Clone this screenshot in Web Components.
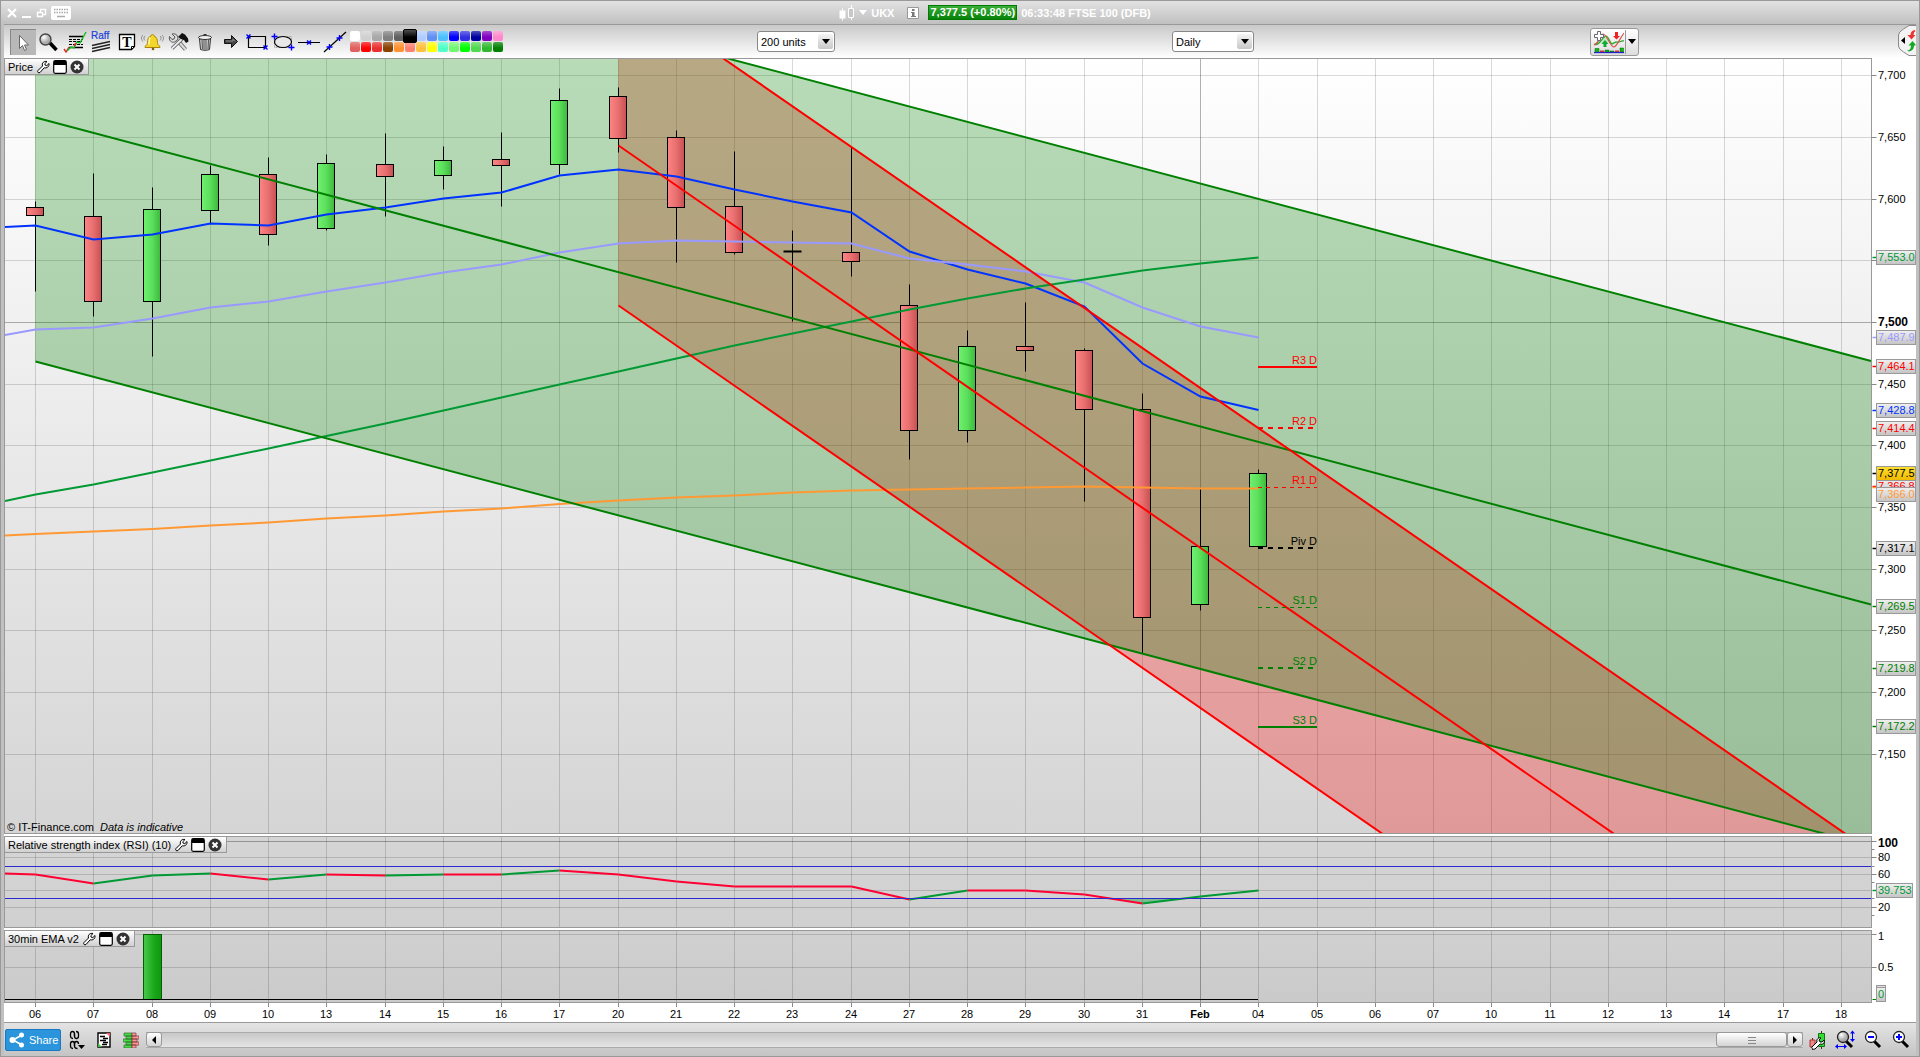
<!DOCTYPE html>
<html lang="en">
<head>
<meta charset="utf-8">
<title>UKX - FTSE 100 (DFB)</title>
<style>
    html, body { margin: 0; height: 100%; }
    body { font: 11px/14px "Liberation Sans", Arial, sans-serif; color: #000; }
</style>
</head>
<body>
<trading-window></trading-window>

<script>

/* ---------- icons ---------- */

const CROSS = (x, y) => `<path d="M${x-2} ${y-2}l4 4m0-4l-4 4" stroke="#00f" stroke-width="1.4" fill="none"/>`;
const PLUS = (x, y) => `<path d="M${x-3} ${y}h6m-3-3v6" stroke="#00f" stroke-width="1.4" fill="none"/>`;

const LENS = /* html */ `
    <defs><radialGradient id="l" cx=".35" cy=".3"><stop offset="0" stop-color="#fff"/><stop offset="1" stop-color="#aaa"/></radialGradient></defs>`;

const ICONS = {
    cursor: [26, 26, `<path d="M9.5 6.500v13l3-3 2 5 2-1-2-4.500h4z" fill="#fff" stroke="#666"/>`],
    magnifier: [26, 26, `${LENS}<path d="M14 14l6.500 7" stroke="#000" stroke-width="3.500"/><circle cx="9.500" cy="10.500" r="5.500" fill="url(#l)" stroke="#444" stroke-width="1.400"/>`],
    study: [26, 26, `<g stroke="#000" fill="none"><path d="M7 7.500h14M7 18.500h14" stroke-width="1.400"/><path d="M7 10.500h14M7 12.500h13M7 15.500h14" stroke-dasharray="3 1"/></g>
        <path d="M2 20l2 3 3-5" stroke="#e22" fill="none" stroke-width="1.400"/><path d="M5 22l4-4 3 1 3-6 3 1 6-11" stroke="#1b2" fill="none" stroke-width="1.400"/><path d="M12 17l2-3" stroke="#e22" stroke-width="1.500"/>`],
    raff: [26, 26, `<text x="3" y="10" font-size="10" fill="#1a3fd8" stroke="#1a3fd8" stroke-width=".2">Raff</text><path d="M4 16.500l18-4M4 19.500l18-4M4 22.500l18-4" stroke="#222" stroke-width="1.300"/>`],
    text: [26, 26, `<path d="M5.500 5.500h15v12l-3 3h-12z" fill="#fff" stroke="#000" stroke-width="1.300"/><path d="M20.500 17.500h-3v3z" fill="#fff" stroke="#000"/><text x="13" y="18" text-anchor="middle" font-family="Liberation Serif, serif" font-weight="bold" font-size="14">T</text>`],
    bell: [26, 26, `<path d="M12.500 5.500c1 0 1.500.7 1.500 1.500 3 1 3.500 4 3.500 6.500 0 2 1 2.500 2.500 4v1H5v-1c1.500-1.500 2.500-2 2.500-4 0-2.500.5-5.500 3.500-6.500 0-.8.5-1.500 1.500-1.500z" fill="#f4d52a" stroke="#a8860a"/><path d="M10 8.500c-1 2-1 5-1 7" stroke="#fff8b0" stroke-width="1.500" fill="none"/><circle cx="13" cy="20" r="1.300" fill="#8a5a10"/><path d="M5 7c-1.500 1-1.500 3 0 4.500M3 6c-2 2-2 4 0 6.500M20 7c1.500 1 1.500 3 0 4.500M22 6c2 2 2 4 0 6.500" stroke="#777" stroke-width=".8" fill="none"/>`],
    tools: [26, 26, `<path d="M12 12l7.500 8.500" stroke="#666" stroke-width="4"/><path d="M12 12l7.500 8.500" stroke="#ddd" stroke-width="2.200"/><path d="M17 9L6 19.500" stroke="#555" stroke-width="3.500"/><path d="M17 9L6 19.500" stroke="#eee" stroke-width="1.800"/><path d="M6 5l3 3-1 2-2 .5-2.500-3c-1 4 2 6.500 5 5.500l3-2c1.500-4-1.500-7-5.500-6z" fill="#ddd" stroke="#555"/><path d="M12 8l4-4 3 1.500 3 4 .5 3-2.500 1.500-2-3-2-.5z" fill="#111"/>`],
    trash: [26, 26, `<path d="M7.500 10h11l-1 10.500c-2 1-7 1-9 0z" fill="#ccc" stroke="#333"/><path d="M10 11l.5 9M12 11v9.500M14 11v9.500M16.500 11l-.5 9" stroke="#555"/><ellipse cx="13" cy="8.500" rx="6.500" ry="2" fill="#eee" stroke="#333"/><path d="M11 6.500c0-1.500 4-1.500 4 0" fill="none" stroke="#333"/>`],
    arrow: [26, 26, `<path d="M6.500 10.500h7v-4l6 6-6 6v-4h-7z" fill="#444" stroke="#111"/><path d="M8 12h7v-2l2 2.500" fill="none" stroke="#888"/>`],
    rect: [26, 26, `<path d="M4.500 7.500h17v11h-17z" fill="none" stroke="#000" stroke-width="1.200"/>${CROSS(4.5, 7.5)}${CROSS(21.5, 18.5)}`],
    ellipse: [26, 26, `<path d="M4.500 7.500h17v11h-17z" fill="none" stroke="#aaa" stroke-dasharray="2 1"/><ellipse cx="13" cy="13" rx="8.500" ry="5.500" fill="#e8e8e8" stroke="#000" stroke-width="1.200"/>${PLUS(4.5, 7.5)}${PLUS(21.5, 18.5)}`],
    hline: [26, 26, `<path d="M2 13.500h22" stroke="#000"/>${CROSS(13, 13.5)}`],
    dline: [26, 26, `<path d="M2 23L24 3" stroke="#000" stroke-width="1.200"/>${PLUS(7.5, 18)}${PLUS(17.5, 9)}`],
    indicators: [32, 24, `<path d="M2 14c5 3 8-7 12-8 3 1 4 7 6 8l4-2c4 1 5-2 8-1" fill="#bfe8bf" stroke="#2a2" stroke-width="1.200"/><path d="M2 15c5-2 5-7 9-11 4 0 7 13 11 13 3-1 5-7 10-14" fill="none" stroke="#d55" stroke-width="1.200"/>
        <path d="M5.500 1.500h3v3h3v3h-3v3h-3v-3h-3v-3h3z" fill="#fff" stroke="#667"/><path d="M23 2h3v4h2l-3.500 3.500L21 6h2z" fill="#e22"/><path d="M11.500 17v-3h-2l3.500-4 3.500 4h-2v3z" fill="#1a3"/>
        <path d="M3 18.500h4v4H3zM13 20h4v2h-4zM28 18h3.500v4H28zM18 21h4v1h-4z" fill="#1b1" stroke="#060" stroke-width=".5"/><path d="M8 20.500h4V22H8zM23 20.500h4V22h-4z" fill="#d33"/><path d="M2 22.500h30" stroke="#22c" stroke-width="1.300"/>`],
    swap: [18, 31, `<path d="M18 .5h-7L5.500 4Q.5 7 .5 10v11q0 3 5 6l5.500 3.500h7" fill="#f3f3f3" stroke="#888"/><path d="M7 12v7l-4-3.500z"/><path d="M16.500 5q-4 1-4 5H9.500l4 4.500 4-4.500h-2q0-3 2-4z" fill="#e33"/><path d="M9 25.500q4 0 4-5h-2.500l4-4.500 3 3.500v1h-1.500q0 5-5 6z" fill="#1a2"/>`],
    close: [12, 12, `<path d="M2 2l8 8m0-8l-8 8" stroke="#fff" stroke-width="2.200"/>`],
    minimise: [12, 12, `<path d="M1 10h9" stroke="#fff" stroke-width="2"/>`],
    restore: [12, 12, `<path d="M4.500 2.500h5v5h-5z" fill="#ccc" stroke="#fff" stroke-width="1.400"/><path d="M1.500 5.500h5v4h-5z" fill="#ccc" stroke="#fff" stroke-width="1.400"/>`],
    keyboard: [20, 14, `<rect width="20" height="14" rx="2" fill="#fff"/><path d="M3 3.500h14M3 6.500h14" stroke="#aaa" stroke-width="1.500" stroke-dasharray="1.500 1"/><path d="M6 10.500h8" stroke="#aaa" stroke-width="1.500"/>`],
    candles: [16, 16, `<path d="M3.500 3.500v12M12.500 0v15" stroke="#fff"/><path d="M.5 5.500h6v8h-6z" fill="#fff"/><path d="M9.500 3.500h5v9h-5z" fill="#c8c8c8" stroke="#fff"/>`],
    caret: [8, 5, `<path d="M0 0h8L4 5z" fill="currentColor"/>`],
    info: [12, 12, `<path d="M.5.5h11v11H.5z" fill="#fff" stroke="#999"/><path d="M5 2h2.500v2H5zM4 5h3.500v4H9v1H4V9h1V6H4z" fill="#777"/>`],
    wrench: [14, 14, `<path d="M2 10.500l4.500-4.500C5.500 3 8 .8 11 1.500L8.800 3.700l.4 1.500 1.600.5L13 3.500c.5 3-2 5-4.800 4.300L4 12.500c-1.500 1-3-.5-2-2z" fill="#fff" stroke="#000"/>`],
    pane: [14, 14, `<rect x=".7" y=".7" width="12.600" height="12.600" rx="1.500" fill="#fff" stroke="#000" stroke-width="1.200"/><path d="M1 1h12v4H1z"/>`],
    shut: [14, 14, `<circle cx="7" cy="7" r="6.500" fill="#333"/><path d="M4.500 4.500l5 5m0-5l-5 5" stroke="#fff" stroke-width="2"/>`],
    share: [16, 16, `<path d="M13 3L4 8l9 5" stroke="#fff" stroke-width="1.600" fill="none"/><g fill="#fff"><circle cx="12.500" cy="3" r="2.500"/><circle cx="3.500" cy="8" r="3"/><circle cx="12.500" cy="13" r="2.500"/></g>`],
    link: [16, 20, `<g fill="none" stroke="#000" stroke-width="1.300"><path d="M4 8.500Q1.500 8.500 1.500 6V4q0-2.500 2-2.500T5.500 4v2M7 1.500q2.500 0 2.500 2.500v2q0 2.500-2 2.500T5.500 6M4 18.500q-2.500 0-2.500-2.500v-2q0-2.500 2-2.500t2 2.500v2M5.500 16q0 2.500 3 2.500M5.500 14q0-2.500 2-2.500T9.500 14"/><path d="M5.500 3.500v3M5.500 13v3"/></g><path d="M9 15h7l-3.500 4z"/>`],
    notes: [14, 16, `<path d="M1 1h12v14H1z" fill="#fff" stroke="#000" stroke-width="1.400"/><path d="M3 4.500h5M6 6.500h5M3 8.500h6M6 10.500h5M5 12.500h5" stroke="#000" stroke-width="1.400"/><path d="M9 1h4v4z" fill="#e66"/><path d="M1 15v-4l4 4z" fill="#4b4"/>`],
    depth: [16, 16, `<path d="M1 1h8v3H1zM3 4h6v3H3zM0 7h9v3H0zM3 10h6v3H3zM1 13h8v3H1z" fill="#4d4" stroke="#363" stroke-width=".7"/><path d="M9 1h4v3H9zM9 4h7v3H9zM9 7h5v3H9zM9 10h7v3H9zM9 13h4v3H9z" fill="#f99" stroke="#733" stroke-width=".7"/>`],
    style: [18, 20, `<path d="M3.500 8v12M12.500 1v18" stroke="#622"/><path d="M1 10h5v7H1z" fill="#e88" stroke="#a33"/><path d="M9.500 3.500h6v13h-6z" fill="#3d3" stroke="#171"/><path d="M3 17l5-5c-1-3 2-5 4-4l-2 2 1 2h2l2-2c1 3-1 5-4 4l-5 5c-2 1-4-1-3-2z" fill="#fff" stroke="#000"/>`],
    fit: [20, 20, `${LENS}<path d="M11 11l6 6" stroke="#000" stroke-width="3"/><circle cx="8" cy="7" r="5.500" fill="url(#l)" stroke="#222" stroke-width="1.300"/><path d="M17.500 2v8M2 16.500h8" stroke="#00f"/><path d="M15 3.500L17.500.5 20 3.500zM15 9l2.500 3L20 9zM3 14l-3 2.500L3 19zM9 14l3 2.500L9 19z" fill="#00f"/>`],
    zoomOut: [20, 20, `<path d="M11 11l6 6" stroke="#000" stroke-width="3"/><circle cx="8" cy="7" r="5.500" fill="#fff" stroke="#222" stroke-width="1.300"/><path d="M5 7h6" stroke="#00f" stroke-width="2"/>`],
    zoomIn: [20, 20, `<path d="M11 11l6 6" stroke="#000" stroke-width="3"/><circle cx="8" cy="7" r="5.500" fill="#fff" stroke="#222" stroke-width="1.300"/><path d="M5 7h6M8 4v6" stroke="#00f" stroke-width="2"/>`],
    left: [6, 8, `<path d="M5 0v8L1 4z"/>`],
    right: [6, 8, `<path d="M1 0v8l4-4z"/>`],
    grip: [8, 8, `<path d="M0 1.500h8M0 4.500h8M0 7.500h8" stroke="#888"/>`],
};

class UiIcon extends HTMLElement {
    constructor(){
        super();
        this.attachShadow({mode:'open'});
    }

    connectedCallback(){
        const [w, h, body] = ICONS[this.getAttribute('name')];
        this.shadowRoot.innerHTML = /* html */ `
            <style>
                :host { display: block; flex: none; }
                svg { display: block; font-family: "Liberation Sans", sans-serif; }
            </style>
            <svg width="${w}" height="${h}" viewBox="0 0 ${w} ${h}" aria-hidden="true">${body}</svg>
        `;
    }
}
customElements.define('ui-icon', UiIcon);


/* ---------- title bar ---------- */

class TitleBar extends HTMLElement {
    constructor(){
        super();
        this.attachShadow({mode:'open'});
        this.shadowRoot.innerHTML = /* html */ `
            <style>
                :host {
                    display: flex; align-items: center; height: 23px; padding-left: 5px;
                    background: linear-gradient(#e2e2e2, #c0c0c0);
                    color: #fff; font-weight: bold;
                }
                button { border: 0; padding: 0; background: none; color: #fff; }
                .window { display: flex; align-items: center; gap: 3px; }
                .symbol { flex: 1; display: flex; align-items: center; justify-content: center; }
                .pick { display: flex; align-items: center; gap: 4px; font: inherit; margin-right: 13px; }
                .price { margin: 0 4px 0 9px; padding: 0 1px; border: 1px solid #007a00; background: linear-gradient(#3aae3a, #078207); line-height: 13px; }
            </style>
            <div class="window">
                <button aria-label="Close"><ui-icon name="close"></ui-icon></button>
                <button aria-label="Minimise"><ui-icon name="minimise"></ui-icon></button>
                <button aria-label="Restore"><ui-icon name="restore"></ui-icon></button>
                <button aria-label="Keyboard"><ui-icon name="keyboard"></ui-icon></button>
            </div>
            <div class="symbol">
                <button class="pick"><ui-icon name="candles"></ui-icon><ui-icon name="caret"></ui-icon>UKX</button>
                <button aria-label="Information"><ui-icon name="info"></ui-icon></button>
                <span class="price">7,377.5 (+0.80%)</span>
                <span>06:33:48 FTSE 100 (DFB)</span>
            </div>
        `;
    }
}
customElements.define('title-bar', TitleBar);


/* ---------- toolbar ---------- */

class DropDown extends HTMLElement {
    constructor(){
        super();
        this.attachShadow({mode:'open'});
    }

    connectedCallback(){
        this.shadowRoot.innerHTML = /* html */ `
            <style>
                :host { display: inline-grid; align-items: center; }
                select, .arrow { grid-area: 1 / 1; }
                select {
                    appearance: none; box-sizing: border-box; width: 100%; height: 21px; padding: 0 20px 0 3px;
                    border: 1px solid #888; border-radius: 3px; background: #fff; font: inherit; color: #000;
                }
                .arrow {
                    justify-self: end; display: grid; place-items: center; width: 15px; height: 15px; margin-right: 2px;
                    border-radius: 2px; background: linear-gradient(#f4f4f4, #c8c8c8); pointer-events: none;
                }
            </style>
            <select aria-label="${this.getAttribute('label')}"><option>${this.getAttribute('value')}</option></select>
            <span class="arrow"><ui-icon name="caret"></ui-icon></span>
        `;
    }
}
customElements.define('drop-down', DropDown);

const TOOLS = ['cursor', 'magnifier', 'study', 'raff', 'text', 'bell', 'tools', 'trash', 'arrow', 'rect', 'ellipse', 'hline', 'dline'];
const SWATCHES = [
    '#ffffff', '#d0d0d0', '#a8a8a8', '#808080', '#606060', '#000000', '#b0ccff', '#6090f4', '#4cc0ff', '#0000ff', '#3030e0', '#0000a0', '#8000c0', '#ff88cc',
    '#e06060', '#ff0000', '#e83030', '#8a4000', '#ff9030', '#ff8070', '#ffc040', '#ffff00', '#50ffc8', '#70f870', '#00ff00', '#50d850', '#30b830', '#008000'
];

class ToolBar extends HTMLElement {
    constructor(){
        super();
        this.attachShadow({mode:'open'});
        this.shadowRoot.innerHTML = /* html */ `
            <style>
                :host {
                    display: flex; align-items: center; height: 33px; padding-left: 6px;
                    border-top: 1px solid #999; background: linear-gradient(#c9c9c9, #fff);
                }
                button { border: 0; padding: 0; background: none; }
                .tools { display: flex; flex: none; }
                .tools .on { background: #b8b8b8; box-shadow: inset 1px 1px #888; }
                .palette { display: grid; grid-template-columns: repeat(14, 10px); grid-auto-rows: 10px; gap: 1px; margin-left: 2px; flex: none; }
                .palette button { border-radius: 2px; background: linear-gradient(rgba(255,255,255,.3), rgba(255,255,255,0) 60%) var(--c); }
                .palette .on { margin: -2px; border: 1px solid #000; z-index: 1; }
                .study { display: flex; align-items: center; height: 26px; border: 1px solid #999; border-radius: 3px; background: linear-gradient(#fff, #ddd); }
                .study button:first-child { padding: 0 1px; border-right: 1px solid #999; }
                .study button:last-child { padding: 0 2px; }
                .edge { align-self: flex-start; }
                .units { width: 78px; }
                .period { width: 82px; }
            </style>
            <div class="tools">
                ${TOOLS.map((t, i) => `<button aria-label="${t}" class="${i ? '' : 'on'}"><ui-icon name="${t}"></ui-icon></button>`).join('')}
            </div>
            <div class="palette">
                ${SWATCHES.map((c, i) => `<button aria-label="${c}" class="${i === 5 ? 'on' : ''}" style="--c:${c}"></button>`).join('')}
            </div>
            <span style="flex:254"></span>
            <drop-down class="units" label="History" value="200 units"></drop-down>
            <span style="flex:337"></span>
            <drop-down class="period" label="Timeframe" value="Daily"></drop-down>
            <span style="flex:336"></span>
            <div class="study">
                <button aria-label="Add indicator"><ui-icon name="indicators"></ui-icon></button>
                <button aria-label="Indicator list"><ui-icon name="caret"></ui-icon></button>
            </div>
            <span style="flex:259"></span>
            <button class="edge" aria-label="Trade"><ui-icon name="swap"></ui-icon></button>
        `;
    }
}
customElements.define('tool-bar', ToolBar);


/* ---------- chart data, in layout units ---------- */

const DAYS = '06 07 08 09 10 13 14 15 16 17 20 21 22 23 24 27 28 29 30 31 Feb 04 05 06 07 10 11 12 13 14 17 18'.split(' ');
const dayX = i => Math.round(35.2 + i * 58.25) + .5;
const priceY = p => 384.3 + (7450 - p) * 1.2333;

// high, body top, body bottom, low, up
const CANDLES = [
    [201, 207, 215, 291, 0], [173, 216, 301, 316, 0], [187, 209, 301, 356, 1], [165, 174, 210, 223, 1],
    [157, 174, 234, 245, 0], [154, 163, 228, 230, 1], [133, 164, 176, 216, 0], [146, 160, 175, 189, 1],
    [132, 159, 165, 206, 0], [88, 100, 164, 174, 1], [87, 96, 138, 152, 0], [130, 137, 207, 262, 0],
    [151, 206, 252, 254, 0], [230, 251, 251, 321, 0], [147, 252, 261, 276, 0], [284, 305, 430, 459, 0],
    [330, 346, 430, 442, 1], [302, 346, 350, 371, 0], [348, 350, 409, 501, 0], [393, 409, 617, 653, 0],
    [488, 546, 604, 610, 1], [469, 473, 546, 546, 1]
];

// first value sits on the left edge, the rest on the days
const AVERAGES = [
    ['#0033ff', [227, 225.5, 239.5, 234.5, 223.5, 225.5, 214.5, 207.5, 198.5, 192.5, 175.5, 169.5, 176.5, 189.5, 201.5, 212.5, 251.5, 269.5, 283.5, 306.5, 363.5, 396.5, 410]],
    ['#9999ff', [335, 329.5, 327.5, 318.5, 307.5, 301.5, 291.5, 282.5, 272.5, 264.5, 252.5, 243.5, 240.5, 241.5, 242.5, 243.5, 258.5, 264.5, 271.5, 282.5, 307.5, 326.5, 337.5]],
    ['#009933', [501, 494.5, 484.5, 472.5, 460.5, 448.5, 436, 423.5, 410.5, 397.5, 384.5, 371.5, 358.5, 345.5, 333.5, 321.5, 309.5, 298.5, 288.5, 279.5, 270.5, 263.5, 257.5]],
    ['#ff9933', [535.5, 534, 531.5, 529, 525.5, 522.5, 518.5, 515.5, 511.5, 508.5, 504, 500.5, 497.5, 495.5, 492.5, 490.5, 489.5, 488.5, 487.5, 486.5, 487.5, 488.5, 488.5]]
];

const RSI = [873.5, 874.5, 883.5, 875.5, 873.5, 879.5, 874.5, 875.5, 874.5, 874.5, 870.5, 874.5, 881.5, 886.5, 886.5, 886.5, 899.5, 890.5, 890.5, 894.5, 903.5, 896.5, 890.5];

const PIVOTS = [
    ['R3 D', 7464.1, '#ff0000', 2, ''], ['R2 D', 7414.4, '#ff0000', 2, '5 5'], ['R1 D', 7366.8, '#ff0000', 1, '4 4'],
    ['Piv D', 7317.1, '#000000', 2, '5 5'],
    ['S1 D', 7269.5, '#008000', 1, '4 4'], ['S2 D', 7219.8, '#008000', 2, '5 5'], ['S3 D', 7172.2, '#008000', 2, '']
];

const TAGS = [
    ['7,553.0', 7553, '#009933'], ['7,487.9', 7487.9, '#9999ff'], ['7,464.1', 7464.1, '#ff0000'], ['7,428.8', 7428.8, '#0033ff'],
    ['7,414.4', 7414.4, '#ff0000'], ['7,366.8', 7366.8, '#ff0000'], ['7,366.0', 7366, '#ff9933'], ['7,377.5', 7377.5, '#000000'], ['7,317.1', 7317.1, '#000000'],
    ['7,269.5', 7269.5, '#008000'], ['7,219.8', 7219.8, '#008000'], ['7,172.2', 7172.2, '#008000']
];


/* ---------- chart panels ---------- */

const AXIS = 45;
const PLOT = 1867;

class ChartPanel extends HTMLElement {
    constructor(){
        super();
        this.attachShadow({mode:'open'});
        this.shadowRoot.innerHTML = /* html */ `
            <style>
                :host { display: flex; position: relative; min-height: 0; background: #fff; }
                svg { display: block; flex: 1; width: 100%; min-width: 0; height: auto; font-size: 11px; overflow: visible; }
                .head {
                    position: absolute; left: 1px; top: 1px; display: flex; align-items: center; gap: 3px; box-sizing: border-box; height: 16px; padding: 0 4px 0 3px;
                    border: solid #999; border-width: 0 1px 1px 0; background: linear-gradient(#fff, #d0d0d0);
                }
                .head button { border: 0; padding: 0; background: none; }
            </style>
            <svg></svg>
            <div class="head">
                <slot></slot>
                <button aria-label="Settings"><ui-icon name="wrench"></ui-icon></button>
                <button aria-label="Detach"><ui-icon name="pane"></ui-icon></button>
                <button aria-label="Remove"><ui-icon name="shut"></ui-icon></button>
            </div>
        `;
        this.svg = this.shadowRoot.querySelector('svg');
    }

    connectedCallback(){
        this.observer = new ResizeObserver(() => this.render());
        this.observer.observe(this);
        this.render();
    }

    disconnectedCallback(){
        this.observer.disconnect();
    }

    x(v){ return (v - 4) * this.kx; }
    y(v){ return (v - this.top) * this.ky; }

    path(points){
        return points.map(([a, b], i) => `${i ? 'L' : 'M'}${this.x(a).toFixed(2)} ${this.y(b).toFixed(2)}`).join('');
    }

    days(values){
        return values.map((v, i) => [i ? dayX(i - 1) : 5, v]);
    }

    row(v, strong){
        const y = Math.floor(this.y(v)) + .5;
        return `<path d="M1 ${y}H${this.right}" stroke="#000" stroke-opacity="${strong ? .3 : .15}"/>`;
    }

    columns(){
        return DAYS.map((d, i) => `<path d="M${this.x(dayX(i))} 1V${this.height}" stroke="#000" stroke-opacity="${d === 'Feb' ? .3 : .15}"/>`).join('');
    }

    tick(v){
        return `<path d="M${this.right} ${Math.floor(this.y(v)) + .5}h5" stroke="#888"/>`;
    }

    label(text, v, bold){
        // keep the topmost label inside its panel
        const y = Math.max(Math.floor(this.y(v)) + 4, bold ? 11 : 10);
        return `${this.tick(v)}<text x="${this.right + 6.5}" y="${y}" ${bold ? 'font-weight="bold" font-size="12"' : ''}>${text}</text>`;
    }

    tag(text, v, color, shift = 0, width = 39){
        const y = Math.floor(this.y(v)) + .5;
        const fill = text === '7,377.5' ? 'url(#gold)' : 'url(#tag)';
        return `<path d="M${this.right + 1} ${y}h4" stroke="${color}" stroke-width="1.500"/>
            <rect x="${this.right + 5}" y="${y - 7 + shift}" width="${width}" height="14" fill="${fill}" stroke="#999"/>
            <text x="${this.right + 6.5}" y="${y + 3.5 + shift}" fill="${color}">${text}</text>`;
    }

    render(){
        const box = this.getBoundingClientRect();
        if(!box.width || !box.height) return;

        this.height = Math.round(box.height);
        this.width = Math.round(box.width);
        this.right = this.width - AXIS + .5;
        this.kx = (this.width - AXIS) / PLOT;
        this.ky = this.height / this.span;
        const [from, to] = this.shade;

        this.svg.innerHTML = /* html */ `
            <defs>
                <linearGradient id="bg" x2="0" y2="1"><stop stop-color="${from}"/><stop offset="1" stop-color="${to}"/></linearGradient>
                <linearGradient id="up"><stop stop-color="#70f070"/><stop offset=".5" stop-color="#5ce05c"/><stop offset="1" stop-color="#3cb83c"/></linearGradient>
                <linearGradient id="down"><stop stop-color="#ff8484"/><stop offset=".5" stop-color="#e87070"/><stop offset="1" stop-color="#c85050"/></linearGradient>
                <linearGradient id="bar"><stop stop-color="#4cc84c"/><stop offset=".6" stop-color="#18a818"/><stop offset="1" stop-color="#109810"/></linearGradient>
                <linearGradient id="tag" x2="0" y2="1"><stop stop-color="#f0f0f0"/><stop offset="1" stop-color="#c4c4c4"/></linearGradient>
                <linearGradient id="gold" x2="0" y2="1"><stop stop-color="#ffe030"/><stop offset="1" stop-color="#f0b800"/></linearGradient>
                <clipPath id="plot"><rect x="1" y="1" width="${this.right - 1}" height="${this.height - 2}"/></clipPath>
            </defs>
            <rect x=".5" y=".5" width="${this.right - .5}" height="${this.height - 1}" fill="url(#bg)"/>
            <g clip-path="url(#plot)" fill="none">${this.columns()}${this.draw()}</g>
            <rect x=".5" y=".5" width="${this.right - .5}" height="${this.height - 1}" fill="none" stroke="#999"/>
            ${this.axis()}
        `;
    }
}

class PricePanel extends ChartPanel {
    top = 58;
    span = 776;
    shade = ['#ffffff', '#d5d5d5'];

    candle([high, top, bottom, low, up], i){
        const x = this.x(dayX(i));
        const [h, t, b, l] = [high, top, bottom, low].map(v => Math.round(this.y(v)) + .5);
        if(top === bottom){
            return `<path d="M${x} ${h}V${l}" stroke="#000"/><path d="M${x - 9} ${t}h18" stroke="#000" stroke-width="2"/>`;
        }
        return `<path d="M${x} ${h}V${l}" stroke="#000"/><rect x="${x - 9}" y="${t}" width="17" height="${b - t}" fill="url(#${up ? 'up' : 'down'})" stroke="#000"/>`;
    }

    pivot([name, price, color, width, dash]){
        const x = this.x(1258), end = this.x(1317), y = Math.round(this.y(priceY(price))) + (width === 1 ? .5 : 0);
        return `<path d="M${x} ${y}H${end}" stroke="${color}" stroke-width="${width}" stroke-dasharray="${dash}"/>
            <text x="${end}" y="${Math.floor(y) - 3}" text-anchor="end" fill="${color}">${name}</text>`;
    }

    draw(){
        let rows = '';
        for(let p = 7700; p >= 7150; p -= 50) rows += this.row(priceY(p), p === 7500);

        return rows
            + `<path d="${this.path([[618, 40], [696.6, 40], [1866, 848], [1403, 848], [618, 305.5]])}Z" fill="#f00" fill-opacity=".28"/>
               <path d="${this.path([[35, 40], [658, 40], [1871, 361], [1871, 846], [35, 361.5]])}Z" fill="#008000" fill-opacity=".28"/>`
            + CANDLES.map((c, i) => this.candle(c, i)).join('')
            + AVERAGES.map(([color, values]) => `<path d="${this.path(this.days(values))}" stroke="${color}" stroke-width="2"/>`).join('')
            + `<path d="${this.path([[658, 40], [1871, 361]])}${this.path([[35.5, 117.5], [1871, 604.5]])}${this.path([[35.5, 361.5], [1871, 846]])}" stroke="#008000" stroke-width="2"/>
               <path d="${this.path([[696.6, 40], [1866, 848]])}${this.path([[618.5, 145.5], [1634.5, 848]])}${this.path([[618.5, 305.5], [1403, 848]])}" stroke="#f00" stroke-width="2"/>`
            + PIVOTS.map(p => this.pivot(p)).join('')
            + `<text x="3" y="${this.height - 3}" fill="#000">© IT-Finance.com <tspan dx="3" font-style="italic">Data is indicative</tspan></text>`;
    }

    axis(){
        let labels = '';
        for(let p = 7700; p >= 7150; p -= 50){
            // a tag this close hides the label
            const hidden = TAGS.some(([, price]) => Math.abs(price - p) < 5);
            labels += hidden ? this.tick(priceY(p)) : this.label('7,' + (p - 7000), priceY(p), p === 7500);
        }
        return labels + TAGS.map(([text, price, color]) => this.tag(text, priceY(price), color, text === '7,366.0' ? 7 : 0)).join('');
    }
}
customElements.define('price-panel', PricePanel);

class RsiPanel extends ChartPanel {
    top = 836;
    span = 92;
    shade = ['#d5d5d5', '#d0d0d0'];

    draw(){
        const points = this.days(RSI);
        const lines = points.slice(1).map((p, i) => {
            const color = p[1] < points[i][1] ? '#009933' : '#ff0033';
            return `<path d="${this.path([points[i], p])}" stroke="${color}" stroke-width="2"/>`;
        });
        const bands = [866, 898].map(v => `<path d="M1 ${this.y(v) + .5}H${this.right}" stroke="#2a2ad0"/>`);

        return this.row(841, true) + [857, 874, 890, 907].map(v => this.row(v)).join('')
            + `<path d="${this.path([[1109, 898.5], [1142.5, 903.5], [1181, 898.5]])}Z" fill="#009933" fill-opacity=".4"/>`
            + lines.join('') + bands.join('');
    }

    axis(){
        const minor = [849, 866, 882, 898, 915].map(v => `<path d="M${this.right} ${this.y(v) + .5}h3" stroke="#888"/>`);
        return minor.join('') + this.label('100', 841, true) + this.label('80', 857) + this.label('60', 874) + this.label('20', 907)
            + this.tag('39.753', 890, '#009933', 0, 36);
    }
}
customElements.define('rsi-panel', RsiPanel);

class EmaPanel extends ChartPanel {
    top = 930;
    span = 73;
    shade = ['#d1d1d1', '#cacaca'];

    draw(){
        const y = this.y(999) + .5, x = this.x(dayX(2));
        return this.row(934) + this.row(967)
            + `<rect x="${x - 9}" y="${this.y(934) + .5}" width="18" height="${this.y(65)- this.y(0)}" fill="url(#bar)" stroke="#006000"/>
               <path d="M1 ${y}H${this.x(1258)}" stroke="#000"/>`;
    }

    axis(){
        return this.label('1', 934) + this.label('0.5', 967)
            + `<rect x="${this.right + 5}" y="${this.y(985) + .5}" width="9" height="8" fill="#ddd" stroke="#999"/>`
            + `<path d="M${this.right + 1} ${this.y(999) + .5}h4" stroke="#008000"/>`
            + `<rect x="${this.right + 5}" y="${this.y(987) + .5}" width="9" height="14" fill="url(#tag)" stroke="#999"/>
               <text x="${this.right + 6.5}" y="${this.y(998)}" fill="#009933">0</text>`;
    }
}
customElements.define('ema-panel', EmaPanel);

class DateAxis extends HTMLElement {
    constructor(){
        super();
        this.attachShadow({mode:'open'});
        this.shadowRoot.innerHTML = /* html */ `
            <style>
                :host { display: block; height: 19px; background: #fff; }
                svg { display: block; width: 100%; height: 19px; font-size: 11px; }
            </style>
            <svg></svg>
        `;
        this.svg = this.shadowRoot.querySelector('svg');
        new ResizeObserver(() => this.render()).observe(this);
    }

    render(){
        const k = (this.clientWidth - AXIS) / PLOT;
        this.svg.innerHTML = DAYS.map((d, i) => {
            const x = (dayX(i) - 4) * k;
            return `<path d="M${x} 0v4" stroke="#888"/><text x="${x - .5}" y="15" text-anchor="middle" ${d === 'Feb' ? 'font-weight="bold"' : ''}>${d}</text>`;
        }).join('');
    }
}
customElements.define('date-axis', DateAxis);


/* ---------- bottom bar ---------- */

class StatusBar extends HTMLElement {
    constructor(){
        super();
        this.attachShadow({mode:'open'});
        this.shadowRoot.innerHTML = /* html */ `
            <style>
                :host {
                    display: flex; align-items: center; height: 33px; padding: 0 5px 0 1px;
                    border-top: 1px solid #999; background: linear-gradient(#e4e4e4, #c4c4c4);
                }
                button { border: 0; padding: 0; background: none; font: inherit; }
                .share {
                    display: flex; align-items: center; gap: 4px; height: 22px; padding: 0 2px 0 3px;
                    border: 1px solid #1878c0; border-radius: 2px; background: #2a94dc; color: #fff;
                }
                .left { display: flex; align-items: center; gap: 12px; margin: 0 7px 0 8px; }
                .scroll { flex: 1; display: flex; align-items: center; height: 14px; border: solid #aaa; border-width: 1px 0; background: linear-gradient(#c8c8c8, #e4e4e4); }
                .scroll button { display: grid; place-items: center; height: 15px; border: 1px solid #999; background: linear-gradient(#fff, #d4d4d4); }
                .step { width: 16px; border-radius: 3px; }
                .gap { flex: 1; }
                .thumb { width: 71px; border-radius: 3px; }
                .right { display: flex; align-items: center; gap: 8px; margin-left: 6px; }
            </style>
            <button class="share"><ui-icon name="share"></ui-icon>Share</button>
            <div class="left">
                <button aria-label="Link"><ui-icon name="link"></ui-icon></button>
                <button aria-label="Notes"><ui-icon name="notes"></ui-icon></button>
                <button aria-label="Order book"><ui-icon name="depth"></ui-icon></button>
            </div>
            <div class="scroll">
                <button class="step" aria-label="Scroll left"><ui-icon name="left"></ui-icon></button>
                <span class="gap"></span>
                <button class="thumb" aria-label="Position"><ui-icon name="grip"></ui-icon></button>
                <button class="step" aria-label="Scroll right"><ui-icon name="right"></ui-icon></button>
            </div>
            <div class="right">
                <button aria-label="Chart style"><ui-icon name="style"></ui-icon></button>
                <button aria-label="Fit"><ui-icon name="fit"></ui-icon></button>
                <button aria-label="Zoom out"><ui-icon name="zoomOut"></ui-icon></button>
                <button aria-label="Zoom in"><ui-icon name="zoomIn"></ui-icon></button>
            </div>
        `;
    }
}
customElements.define('status-bar', StatusBar);


/* ---------- window ---------- */

class TradingWindow extends HTMLElement {
    constructor(){
        super();
        this.attachShadow({mode:'open'});
        this.shadowRoot.innerHTML = /* html */ `
            <style>
                :host { display: flex; flex-direction: column; box-sizing: border-box; height: 100vh; min-height: 480px; border: 1px solid #999; background: #c0c0c0; }
                main { flex: 1; display: flex; flex-direction: column; min-height: 0; margin: 0 3px; background: #fff; }
                price-panel { flex: 1; }
                rsi-panel { height: 92px; margin: 2px 0; }
                ema-panel { height: 73px; }
            </style>
            <title-bar></title-bar>
            <main>
                <tool-bar></tool-bar>
                <price-panel>Price</price-panel>
                <rsi-panel>Relative strength index (RSI) (10)</rsi-panel>
                <ema-panel>30min EMA v2</ema-panel>
                <date-axis></date-axis>
                <status-bar></status-bar>
            </main>
        `;
    }
}
customElements.define('trading-window', TradingWindow);

</script>
</body>
</html>
